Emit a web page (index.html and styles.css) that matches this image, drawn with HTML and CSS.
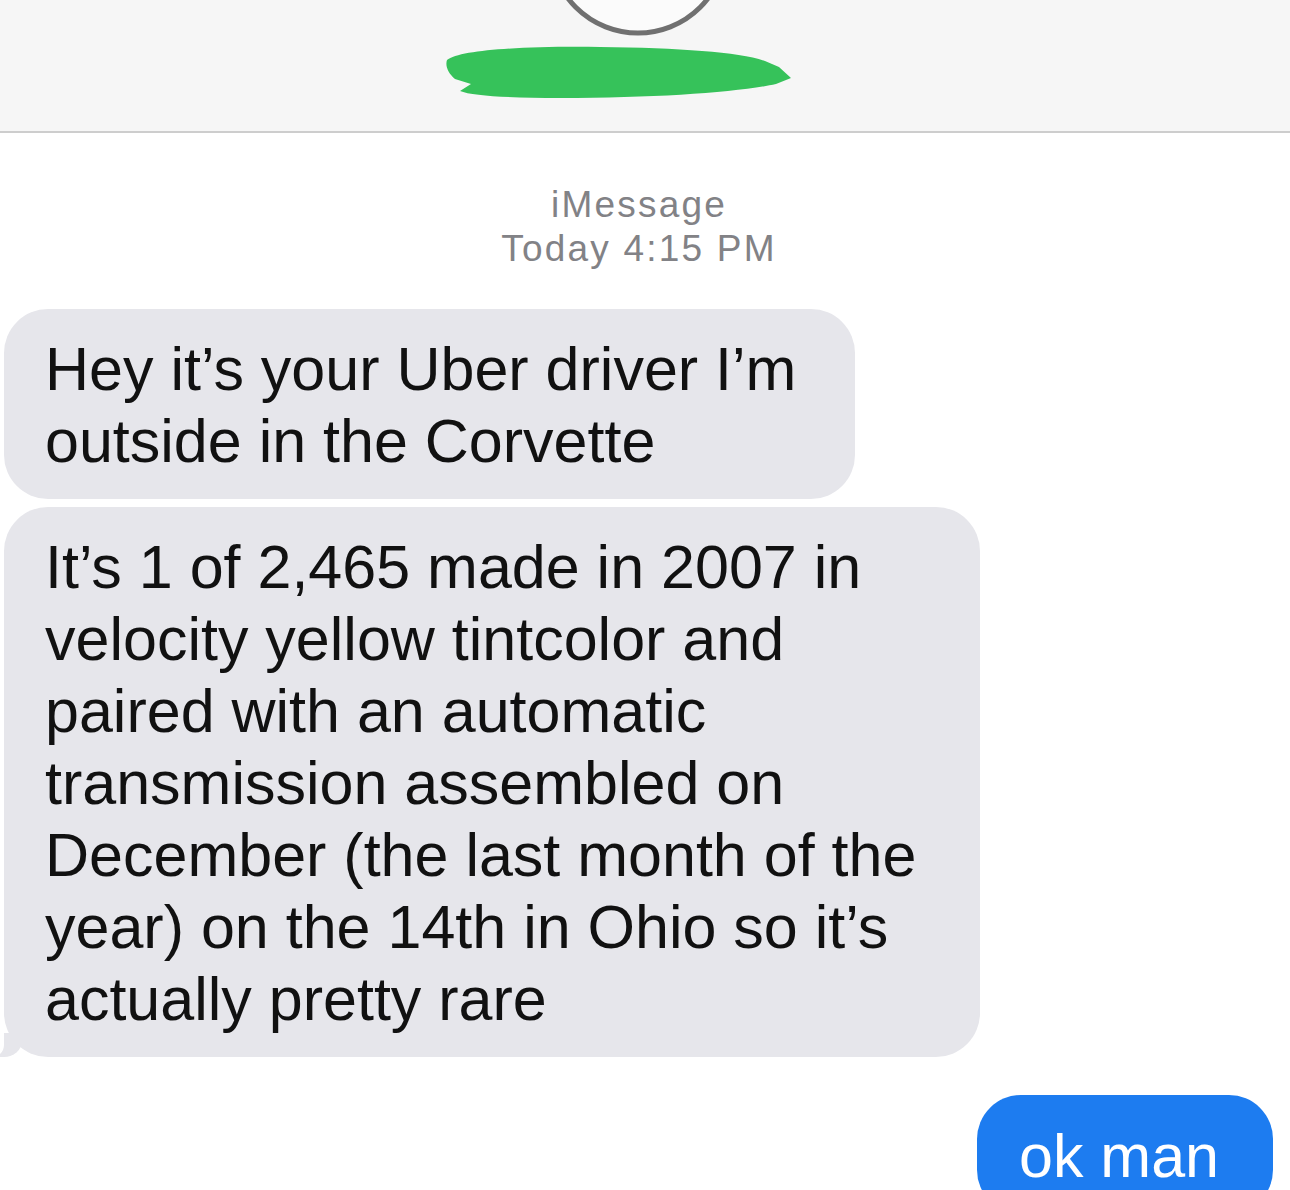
FILE: index.html
```html
<!DOCTYPE html>
<html lang="en">
	<head>
		<title>Messages</title>
		<link rel="stylesheet" href="styles.css">
	</head>
	<body>
		<header class="top-bar">
			<svg class="contact" width="1290" height="131" viewBox="0 0 1290 131">
				<circle cx="638" cy="-55" r="88" fill="#fbfbfb" stroke="#707070" stroke-width="5"/>
				<path d="M447 60 C460 50 520 46 600 47 C680 48 740 52 765 61 L779 67 L791 78 L776 84 C740 92 660 98 560 98 C510 98 472 96 460 91 L471 84 L455 79 C448 73 445 66 447 60 Z" fill="#36c25a"/>
			</svg>
		</header>

		<main class="thread">
			<div class="stamp">
				<div>iMessage</div>
				<div>Today 4:15 PM</div>
			</div>

			<div class="bubble incoming first">Hey it’s your Uber driver I’m<br>outside in the Corvette</div>
			<div class="bubble incoming last">It’s 1 of 2,465 made in 2007 in<br>velocity yellow tintcolor and<br>paired with an automatic<br>transmission assembled on<br>December (the last month of the<br>year) on the 14th in Ohio so it’s<br>actually pretty rare</div>

			<div class="bubble outgoing">ok man</div>
		</main>
	</body>
</html>
```

FILE: styles.css
```css
body {
	margin: 0;
	background: #fff;
	font-family: "Liberation Sans", Arial, sans-serif;
	overflow: hidden;
}
	.top-bar {
		height: 131px;
		background: #f6f6f6;
		border-bottom: 2px solid #cdcdcd;
	}
	.contact {
		display: block;
	}
	.thread {
		display: flex;
		flex-direction: column;
		align-items: flex-start;
	}
	.stamp {
		align-self: stretch;
		margin: 50px 12px 0 0;
		text-align: center;
		font-size: 37px;
		line-height: 44px;
		letter-spacing: 2.2px;
		color: #828286;
	}
	.bubble {
		position: relative;
		font-size: 61px;
		line-height: 72px;
		white-space: nowrap;
		border-radius: 44px;
		padding: 24px 40px 22px 41px;
		box-sizing: border-box;
	}
	.incoming {
		margin-left: 4px;
		background: #e6e6eb;
		color: #111;
	}
	.first {
		margin-top: 38px;
		width: 851px;
	}
	.last {
		margin-top: 8px;
		width: 976px;
	}
	.last::before {
		content: "";
		position: absolute;
		left: -8px;
		bottom: 0;
		width: 26px;
		height: 24px;
		background: #e6e6eb;
		border-bottom-right-radius: 18px 16px;
	}
	.last::after {
		content: "";
		position: absolute;
		left: -16px;
		bottom: 0;
		width: 16px;
		height: 24px;
		background: #fff;
		border-bottom-right-radius: 12px;
	}
	.outgoing {
		align-self: flex-end;
		margin: 38px 17px 0 0;
		width: 296px;
		padding: 25px 40px 22px 42px;
		background: #1d7cf0;
		color: #fff;
	}
```
